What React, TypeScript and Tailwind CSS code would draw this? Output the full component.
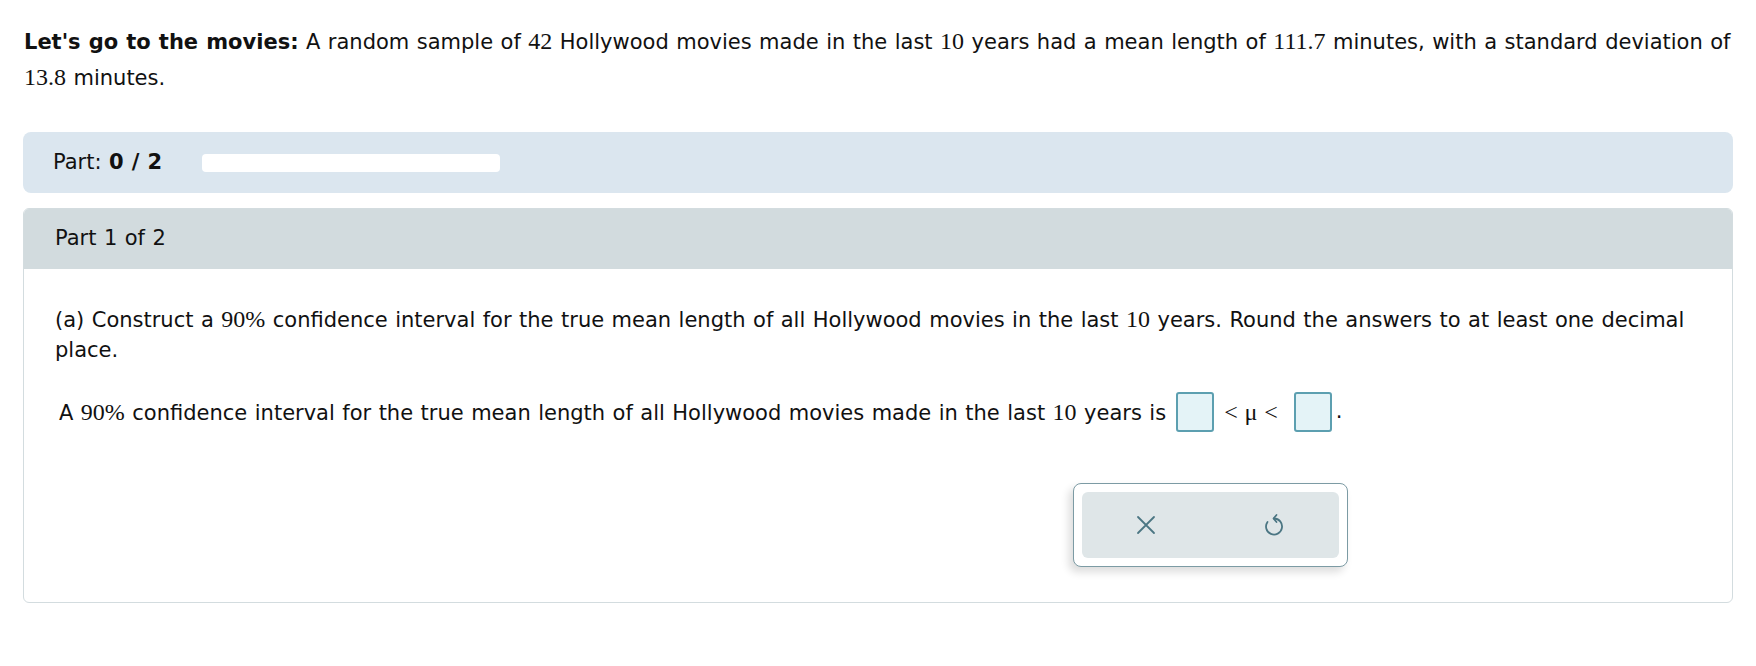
import React from "react";

const M = ({ children }: { children: React.ReactNode }) => (
  <span className="font-['Liberation_Serif',serif] text-[24px] [word-spacing:0]">{children}</span>
);

const AnswerBox = () => (
  <span className="inline-block w-[38px] h-[40px] border-2 border-[#5c9fb0] bg-[#e4f3f7] rounded-[3px]" />
);

const App = () => {
  return (
    <div className="w-[1756px] min-h-[666px] bg-white text-[#111] font-['DejaVu_Sans',sans-serif] text-[21px] [word-spacing:0.8px]">
      {/* question stem */}
      <p className="pt-[24px] pl-[24px] pr-[15px] leading-[35px]">
        <b>Let's go to the movies:</b> A random sample of <M>42</M> Hollywood movies made in the last <M>10</M> years
        had a mean length of <M>111.7</M> minutes, with a standard deviation of <M>13.8</M> minutes.
      </p>

      {/* progress */}
      <div className="mx-[23px] mt-[36px] h-[61px] rounded-[8px] bg-[#dbe6ef] flex items-center pl-[30px]">
        <span className="w-[117px] whitespace-nowrap">
          Part: <b>0 / 2</b>
        </span>
        <div className="ml-[32px] w-[298px] h-[18px] rounded-[4px] bg-white" />
      </div>

      {/* part card */}
      <div className="mx-[23px] mt-[15px] border border-[#d3dcdf] rounded-[6px] overflow-hidden">
        <div className="h-[60px] bg-[#d2dbde] flex items-center pl-[31px]">Part 1 of 2</div>
        <div className="pl-[31px] pr-[31px] pt-[35px] pb-[35px]">
          <p className="leading-[30px]">
            (a) Construct a <M>90%</M> confidence interval for the true mean length of all Hollywood movies in the last{" "}
            <M>10</M> years. Round the answers to at least one decimal place.
          </p>
          <div className="mt-[27px] ml-[4px] h-[40px] flex items-center">
            <span>
              A <M>90%</M> confidence interval for the true mean length of all Hollywood movies made in the last{" "}
              <M>10</M> years is
            </span>
            <span className="ml-[10px] flex">
              <AnswerBox />
            </span>
            <span className="ml-[10px] mr-[16px] font-['Liberation_Serif',serif] text-[24px]">&lt; μ &lt;</span>
            <AnswerBox />
            <span className="ml-[4px]">.</span>
          </div>

          {/* answer tools */}
          <div className="mt-[51px] pl-[1018px]">
            <div className="w-[275px] h-[84px] bg-white border border-[#7c9ba4] rounded-[8px] p-[8px] shadow-[-4px_5px_8px_rgba(0,0,0,0.14)]">
              <div className="h-full rounded-[6px] bg-[#dfe6e8] flex">
                <button className="flex-1 flex items-center justify-center">
                  <svg width="20" height="20" viewBox="0 0 20 20" fill="none" stroke="#4b7683" strokeWidth="1.8" strokeLinecap="round">
                    <path d="M2 2L18 18M18 2L2 18" />
                  </svg>
                </button>
                <button className="flex-1 flex items-center justify-center">
                  <svg width="24" height="26" viewBox="0 0 24 26" fill="none" stroke="#4b7683" strokeWidth="1.8" strokeLinecap="round" strokeLinejoin="round">
                    <path d="M11 6.5a8 8 0 1 1-6.5 3.4" />
                    <path d="M13.5 3L10.5 6.5L13.5 10" />
                  </svg>
                </button>
              </div>
            </div>
          </div>
        </div>
      </div>
    </div>
  );
};

export default App;
